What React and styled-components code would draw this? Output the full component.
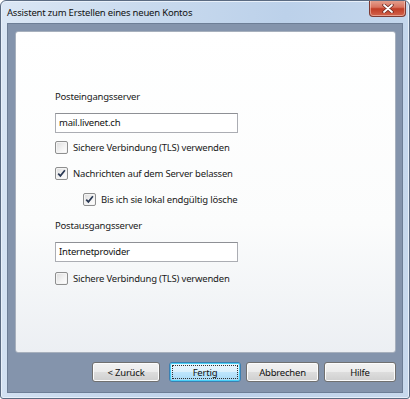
import React from "react";
import styled, { createGlobalStyle } from "styled-components";

const GlobalStyle = createGlobalStyle`
  html, body {
    margin: 0;
    padding: 0;
    background: #ffffff;
  }
  body {
    font-family: "Noto Sans", "Open Sans", sans-serif;
    letter-spacing: -0.2px;
  }
`;

function Checkbox({ checked }) {
  return (
    <Box>
      {checked && (
        <svg width="9" height="9" viewBox="0 0 9 9">
          <path
            d="M1.2 4.6 L3.4 6.9 L7.9 1.3"
            fill="none"
            stroke="#2b3a55"
            strokeWidth="1.7"
          />
        </svg>
      )}
    </Box>
  );
}

function CheckRow({ checked, indent, children }) {
  return (
    <Row $indent={indent}>
      <Checkbox checked={checked} />
      <RowText>{children}</RowText>
    </Row>
  );
}

export default function App() {
  return (
    <>
      <GlobalStyle />
      <Window>
        <TitleBar>
          <Title>Assistent zum Erstellen eines neuen Kontos</Title>
          <CloseButton>
            <svg width="12" height="9" viewBox="0 0 12 9">
              <path
                d="M2 1 L10 8 M10 1 L2 8"
                stroke="#6b2a22"
                strokeWidth="3.4"
                strokeLinecap="round"
              />
              <path
                d="M2 1 L10 8 M10 1 L2 8"
                stroke="#ffffff"
                strokeWidth="1.8"
                strokeLinecap="round"
              />
            </svg>
          </CloseButton>
        </TitleBar>

        <Client>
          <Panel>
            <Label>Posteingangsserver</Label>
            <Input>mail.livenet.ch</Input>
            <CheckRow>Sichere Verbindung (TLS) verwenden</CheckRow>
            <CheckRow checked>Nachrichten auf dem Server belassen</CheckRow>
            <CheckRow checked indent>
              Bis ich sie lokal endgültig lösche
            </CheckRow>
            <Label $top={7}>Postausgangsserver</Label>
            <Input $bottom={3}>Internetprovider</Input>
            <CheckRow>Sichere Verbindung (TLS) verwenden</CheckRow>
          </Panel>

          <ButtonRow>
            <Button $width={68}>&lt; Zurück</Button>
            <Button $width={72} $default>
              <Focus>Fertig</Focus>
            </Button>
            <Button $width={73}>Abbrechen</Button>
            <Button $width={72}>Hilfe</Button>
          </ButtonRow>
        </Client>
      </Window>
    </>
  );
}

const Window = styled.div`
  width: 410px;
  height: 399px;
  box-sizing: border-box;
  border: 1px solid #5b6b82;
  border-radius: 6px 6px 3px 3px;
  background: linear-gradient(
    100deg,
    #dbe7f5 0%,
    #c9daee 30%,
    #bcd1ea 60%,
    #c8d9ed 100%
  );
  box-shadow: inset 0 0 0 1px #e8f0fa;
  display: flex;
  flex-direction: column;
  overflow: hidden;
`;

const TitleBar = styled.div`
  height: 22px;
  display: flex;
  align-items: flex-start;
  justify-content: space-between;
  padding-left: 6px;
`;

const Title = styled.div`
  font-size: 9.5px;
  color: #111;
  line-height: 12px;
  margin-top: 6px;
`;

const CloseButton = styled.div`
  width: 37px;
  height: 17px;
  margin-right: 3px;
  margin-top: -1px;
  box-sizing: border-box;
  border: 1px solid #7d3a33;
  border-top: none;
  border-radius: 0 0 4px 4px;
  background: linear-gradient(#e5a593 0%, #d8735f 45%, #c03d26 55%, #d2634c 100%);
  box-shadow: inset 0 0 0 1px rgba(255, 220, 210, 0.5);
  display: flex;
  align-items: center;
  justify-content: center;
`;

const Client = styled.div`
  flex: 1;
  margin: 0 6px 5px 6px;
  box-sizing: border-box;
  border: 1px solid #6d7e96;
  background: #8494ac;
  padding: 7px 6px 10px 7px;
  display: flex;
  flex-direction: column;
`;

const Panel = styled.div`
  height: 322px;
  box-sizing: border-box;
  border: 1px solid #a7b0bd;
  border-radius: 3px;
  background: linear-gradient(#ffffff 0%, #fbfcfc 60%, #eceff3 100%);
  padding: 58px 0 0 39px;
  display: flex;
  flex-direction: column;
  align-items: flex-start;
`;

const Label = styled.div`
  font-size: 9.5px;
  line-height: 14px;
  color: #1a1a1a;
  margin-top: ${(p) => p.$top || 0}px;
  margin-bottom: 9px;
`;

const Input = styled.div`
  width: 183px;
  height: 20px;
  box-sizing: border-box;
  border: 1px solid #abadb3;
  border-top-color: #8e9095;
  background: #fff;
  font-size: 9.5px;
  line-height: 18px;
  padding-left: 3px;
  color: #111;
  margin-bottom: ${(p) => p.$bottom || 1}px;
`;

const Row = styled.div`
  display: flex;
  align-items: center;
  height: 26px;
  margin-left: ${(p) => (p.$indent ? 28 : 0)}px;
`;

const Box = styled.span`
  width: 13px;
  height: 13px;
  box-sizing: border-box;
  border: 1px solid #8e8f8f;
  border-radius: 2px;
  background: linear-gradient(135deg, #dcdcdc 0%, #f4f4f4 60%, #ffffff 100%);
  box-shadow: inset 0 0 0 1px #f4f4f4;
  display: flex;
  align-items: center;
  justify-content: center;
`;

const RowText = styled.span`
  font-size: 9.5px;
  color: #1a1a1a;
  margin-left: 5px;
`;

const ButtonRow = styled.div`
  display: flex;
  justify-content: flex-end;
  gap: 5px;
  margin-top: 9px;

  & > *:first-child {
    margin-right: 4px;
  }
`;

const Button = styled.div`
  width: ${(p) => p.$width}px;
  height: 20px;
  box-sizing: border-box;
  border: 1px solid ${(p) => (p.$default ? "#3c7fb1" : "#707070")};
  border-radius: 3px;
  background: ${(p) =>
    p.$default
      ? "linear-gradient(#eaf6fd 0%, #d9f0fc 50%, #bee6fd 51%, #a7d9f5 100%)"
      : "linear-gradient(#f2f2f2 0%, #ebebeb 50%, #dddddd 51%, #cfcfcf 100%)"};
  box-shadow: inset 0 0 0 1px ${(p) => (p.$default ? "#48d0f7" : "#fcfcfc")};
  font-size: 9.5px;
  color: #111;
  display: flex;
  align-items: center;
  justify-content: center;
  padding: 2px;
`;

const Focus = styled.span`
  flex: 1;
  align-self: stretch;
  border: 1px dotted #333;
  display: flex;
  align-items: center;
  justify-content: center;
`;
